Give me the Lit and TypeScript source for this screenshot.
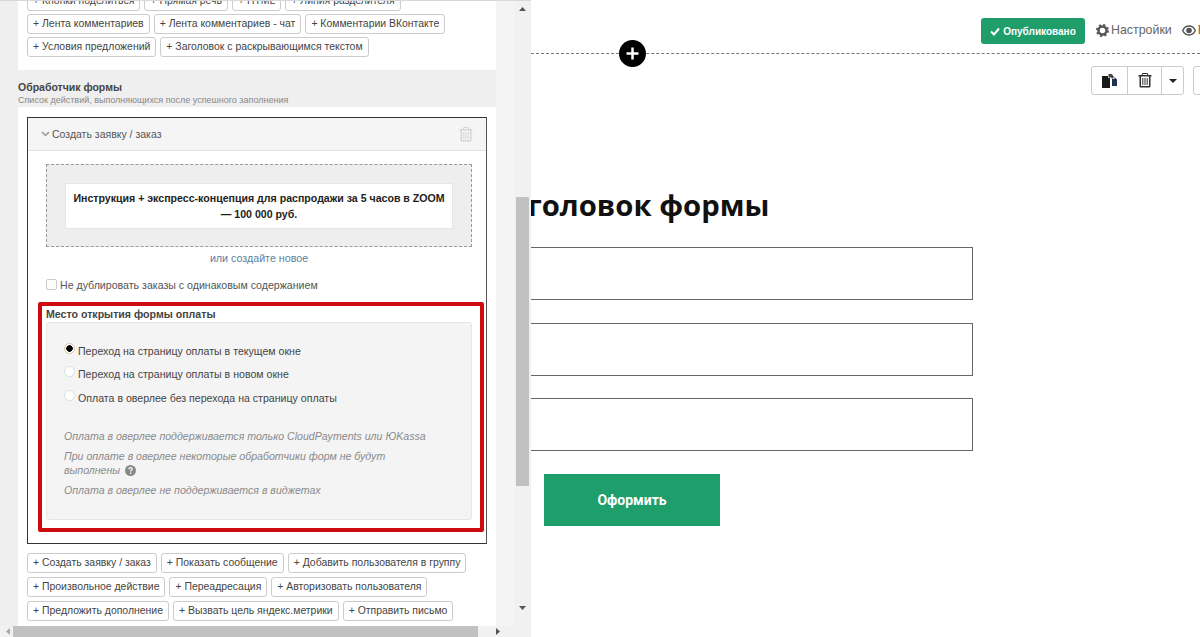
import { LitElement, html, css, svg } from "lit";
import { customElement } from "lit/decorators.js";

const topRows = [
  ["+ Кнопки поделиться", "+ Прямая речь", "+ HTML", "+ Линия разделителя"],
  ["+ Лента комментариев", "+ Лента комментариев - чат", "+ Комментарии ВКонтакте"],
  ["+ Условия предложений", "+ Заголовок с раскрывающимся текстом"],
];
const bottomRows = [
  ["+ Создать заявку / заказ", "+ Показать сообщение", "+ Добавить пользователя в группу"],
  ["+ Произвольное действие", "+ Переадресация", "+ Авторизовать пользователя"],
  ["+ Предложить дополнение", "+ Вызвать цель яндекс.метрики", "+ Отправить письмо"],
];
const radios = [
  ["Переход на страницу оплаты в текущем окне", true],
  ["Переход на страницу оплаты в новом окне", false],
  ["Оплата в оверлее без перехода на страницу оплаты", false],
] as const;

const trash = (c: string) => svg`<path fill="${c}" d="M4.500 0h5l1 2H13.500v1.500h-1V13c0 1-.7 1.500-1.500 1.500H3c-.8 0-1.500-.5-1.500-1.500V3.500h-1V2H3.500zM5 1l-.4 1h4.800L9 1zM3 3.500V13h8V3.500zM4.300 5h1v7h-1zm2.200 0h1v7h-1zm2.200 0h1v7h-1z"/>`;

@customElement("app-root")
export class AppRoot extends LitElement {
  static styles = css`
    :host { display: block; width: 1200px; height: 637px; overflow: hidden; background: #fff; font-family: "Liberation Sans", Arial, sans-serif; }
    .page { display: flex; height: 637px; }
    .panel { width: 531px; flex: none; display: flex; flex-direction: column; background: #f1f1f1; border-top: 1px solid #d8d8d8; box-sizing: border-box; }
    .main { flex: 1; min-height: 0; display: flex; overflow: hidden; }
    .scroller { width: 515px; flex: none; overflow: hidden; box-sizing: border-box; padding-left: 18px; padding-right: 19px; background: linear-gradient(to right, #efefef 496px, #f4f4f4 496px); }
    .card { background: #fff; padding: 0 9px; }
    .card.first { margin-top: -10px; height: 79px; box-sizing: border-box; display: flex; flex-direction: column; gap: 3px; }
    .row { display: flex; gap: 4px; }
    .chip { height: 20px; line-height: 18px; box-sizing: border-box; border: 1px solid #ccc; border-radius: 3px; background: #fff; padding: 0 5px; font-size: 10.45px; color: #444; white-space: nowrap; }
    .title { margin-top: 10px; font-size: 10.5px; font-weight: bold; color: #444; line-height: 14px; }
    .sub { font-size: 9px; line-height: 12px; color: #888; margin-bottom: 1px; }
    .card.second { padding-top: 10px; height: 520px; box-sizing: border-box; position: relative; }
    .box { height: 427px; box-sizing: border-box; border: 1px solid #333; border-right-color: #555; }
    .boxhead { height: 33px; box-sizing: border-box; background: #f5f5f5; border-bottom: 1px solid #e2e2e2; display: flex; align-items: center; padding: 0 13px; font-size: 10.5px; color: #555; gap: 2px; }
    .boxhead span { flex: 1; }
    .boxbody { padding: 13px 14px 0 18px; }
    .dashed { height: 83px; box-sizing: border-box; background: #eee; border: 1px dashed #999; padding: 18px 18px; }
    .product { height: 46px; box-sizing: border-box; background: #fff; border: 1px solid #e6e6e6; text-align: center; font-size: 10.6px; font-weight: bold; line-height: 16px; color: #222; padding: 6px 4px; }
    .link { text-align: center; font-size: 10.7px; color: #5b7f9f; margin-top: 4px; line-height: 14px; }
    .check { display: flex; align-items: center; gap: 3px; margin-top: 13px; font-size: 10.6px; color: #555; height: 14px; }
    .cb { width: 11px; height: 11px; box-sizing: border-box; border: 1px solid #ccc; border-radius: 2px; background: #fff; margin-top: -2px; }
    .label { font-size: 10.6px; font-weight: bold; color: #444; margin-top: 15px; line-height: 14px; }
    .well { height: 198px; box-sizing: border-box; margin-top: 1px; background: #f4f4f4; border: 1px solid #e6e6e6; border-radius: 3px; padding: 17px 17px 0; }
    .radio { display: flex; gap: 3px; font-size: 10.6px; color: #444; line-height: 14px; height: 23px; align-items: center; }
    .radio:nth-child(1) { height: 22px; }
    .radio:nth-child(2) { height: 23px; margin-bottom: 1px; }
    .dot { width: 11px; height: 11px; box-sizing: border-box; flex: none; border-radius: 50%; border: 1px solid #ddd; background: #fff; margin-top: -5px; position: relative; }
    .dot.on { border-color: #d8c8a8; background: radial-gradient(circle, #000 3px, #fff 3.5px); }
    .notes { margin-top: 20px; font-size: 10.6px; font-style: italic; color: #8a8a8a; line-height: 14px; width: 365px; }
    .notes div { margin-bottom: 6px; }
    .notes svg { vertical-align: -2px; margin-left: 2px; }
    .chips2 { display: flex; flex-direction: column; gap: 4px; margin-top: 9px; }
    .vbar { width: 15px; flex: none; background: #f1f1f1; position: relative; display: flex; flex-direction: column; align-items: center; }
    .up { margin-top: 6px; }
    .thumb { width: 13px; height: 289px; background: #c1c1c1; margin-top: 186px; }
    .dn { margin-top: 120px; }
    .hbar { height: 11px; flex: none; display: flex; align-items: center; background: #f1f1f1; }
    .hbar .t { height: 11px; background: #c1c1c1; width: 465px; margin: 0 18px 0 3px; }
    .hbar .lft { margin-left: 6px; }
    .red { position: absolute; left: 20px; top: 195px; width: 446px; height: 230px; box-sizing: border-box; border: 4px solid #cc0a10; border-radius: 2px; pointer-events: none; }
    .right { flex: 1; min-width: 0; overflow: hidden; }
    .topbar { height: 53px; box-sizing: border-box; display: flex; align-items: flex-start; padding: 18px 0 0 450px; white-space: nowrap; }
    .pub { height: 26px; width: 104px; box-sizing: border-box; background: #1f9e6c; color: #fff; border-radius: 3px; font-size: 10px; font-weight: bold; display: flex; align-items: center; justify-content: center; gap: 3px; flex: none; }
    .navitem { display: flex; align-items: center; gap: 2px; font-size: 12.4px; color: #666; margin-left: 10px; height: 24px; flex: none; }
    .navitem:nth-child(2) { margin-left: 11px; }
    .sep { height: 0; border-top: 1px dashed #777; position: relative; }
    .plus { position: absolute; left: 88px; top: -14px; width: 27px; height: 27px; }
    .tools { display: flex; justify-content: flex-end; padding-top: 12px; margin-right: -30px; gap: 9px; }
    .group { display: flex; height: 29px; box-sizing: border-box; border: 1px solid #ccc; border-radius: 3px; }
    .group div { display: flex; align-items: center; justify-content: center; width: 35px; border-right: 1px solid #ccc; }
    .group div:nth-child(2) { width: 33px; }
    .group div:last-child { border-right: 0; width: 21px; }
    .blank { width: 37px; height: 29px; box-sizing: border-box; border: 1px solid #ccc; border-radius: 3px; }
    .form { margin-left: -40px; width: 482px; padding-top: 89px; }
    h1 { margin: 0 0 20px; font-family: "Open Sans", "Noto Sans", sans-serif; font-size: 29.3px; line-height: 43px; font-weight: 700; color: #111; white-space: nowrap; }
    .input { height: 53px; box-sizing: border-box; border: 1px solid #666; margin-bottom: 22.5px; }
    .submit { margin: 21px 0 0 53px; width: 176px; height: 52px; background: #1e9e6b; color: #fff; font-family: Roboto, sans-serif; font-size: 14px; font-weight: 700; display: flex; align-items: center; justify-content: center; }
    .input:last-of-type { margin-bottom: 0; }
  `;

  chip(t: string) { return html`<div class="chip">${t}</div>`; }

  render() {
    return html`<div class="page">
      <div class="panel">
        <div class="main">
          <div class="scroller">
            <div class="card first">
              ${topRows.map((r) => html`<div class="row">${r.map((c) => this.chip(c))}</div>`)}
            </div>
            <div class="title">Обработчик формы</div>
            <div class="sub">Список действий, выполняющихся после успешного заполнения</div>
            <div class="card second">
              <div class="box">
                <div class="boxhead">
                  <svg width="9" height="6" viewBox="0 0 9 6"><path d="M1 1l3.500 3.500L8 1" fill="none" stroke="#999" stroke-width="1.500"/></svg>
                  <span>Создать заявку / заказ</span>
                  <svg width="14" height="15" viewBox="0 0 14 15">${trash("#d5d5d5")}</svg>
                </div>
                <div class="boxbody">
                  <div class="dashed">
                    <div class="product">Инструкция + экспресс-концепция для распродажи за 5 часов в ZOOM — 100 000 руб.</div>
                  </div>
                  <div class="link">или создайте новое</div>
                  <div class="check"><div class="cb"></div>Не дублировать заказы с одинаковым содержанием</div>
                  <div class="label">Место открытия формы оплаты</div>
                  <div class="well">
                    ${radios.map(([t, on]) => html`<div class="radio"><div class="dot ${on ? "on" : ""}"></div>${t}</div>`)}
                    <div class="notes">
                      <div>Оплата в оверлее поддерживается только CloudPayments или ЮKassa</div>
                      <div>При оплате в оверлее некоторые обработчики форм не будут выполнены
                        <svg width="11" height="11" viewBox="0 0 11 11"><circle cx="5.500" cy="5.500" r="5.500" fill="#888"/><path d="M3.800 4.200c.1-1 .8-1.500 1.700-1.500s1.700.6 1.700 1.400c0 1.100-1.600 1.200-1.600 2.300" fill="none" stroke="#fff" stroke-width="1.200"/><rect x="5" y="7.400" width="1.300" height="1.300" fill="#fff"/></svg>
                      </div>
                      <div>Оплата в оверлее не поддерживается в виджетах</div>
                    </div>
                  </div>
                </div>
              </div>
              <div class="chips2">
                ${bottomRows.map((r) => html`<div class="row">${r.map((c) => this.chip(c))}</div>`)}
              </div>
              <div class="red"></div>
            </div>
          </div>
          <div class="vbar">
            <svg class="up" width="7" height="4" viewBox="0 0 7 4"><path d="M3.500 0L7 4H0z" fill="#555"/></svg>
            <div class="thumb"></div>
            <svg class="dn" width="7" height="4" viewBox="0 0 7 4"><path d="M0 0h7L3.500 4z" fill="#555"/></svg>
          </div>
        </div>
        <div class="hbar">
          <svg class="lft" width="4" height="7" viewBox="0 0 4 7"><path d="M4 0v7L0 3.500z" fill="#aaa"/></svg>
          <div class="t"></div>
          <svg width="4" height="7" viewBox="0 0 4 7"><path d="M0 0v7l4-3.500z" fill="#555"/></svg>
        </div>
      </div>
      <div class="right">
        <div class="topbar">
          <div class="pub">
            <svg width="10" height="9" viewBox="0 0 10 9"><path d="M1 4.500l3 3L9 1.500" fill="none" stroke="#fff" stroke-width="2"/></svg>
            Опубликовано
          </div>
          <div class="navitem">
            <svg width="13" height="13" viewBox="0 0 13 13"><circle cx="6.500" cy="6.500" r="4" fill="none" stroke="#555" stroke-width="2.400"/><circle cx="6.500" cy="6.500" r="5.600" fill="none" stroke="#555" stroke-width="1.800" stroke-dasharray="2.200 2.200"/></svg>
            Настройки
          </div>
          <div class="navitem">
            <svg width="14" height="11" viewBox="0 0 14 11"><path d="M7 1C4 1 1.800 3 .7 5.500 1.800 8 4 10 7 10s5.200-2 6.300-4.500C12.200 3 10 1 7 1z" fill="none" stroke="#555" stroke-width="1.400"/><circle cx="7" cy="5.500" r="2.800" fill="#555"/></svg>
            Просмотр
          </div>
        </div>
        <div class="sep">
          <svg class="plus" viewBox="0 0 27 27"><circle cx="13.500" cy="13.500" r="13.500" fill="#000"/><path d="M13.500 7.500v12M7.500 13.500h12" stroke="#fff" stroke-width="2.500"/></svg>
        </div>
        <div class="tools">
          <div class="group">
            <div><svg width="15" height="14" viewBox="0 0 15 14"><path d="M0 2h6v2h2v10H0z" fill="#1a1a1a"/><path d="M6.500 0l3 0 2 2 0 2.500H9.500V3.500H6.500z" fill="#444"/><path d="M10 5h2.500V3L15 5.500V12h-5z" fill="#1f3050"/></svg></div>
            <div><svg width="14" height="15" viewBox="0 0 14 15">${trash("#333")}</svg></div>
            <div><svg width="8" height="4" viewBox="0 0 8 4"><path d="M0 0h8L4 4z" fill="#222"/></svg></div>
          </div>
          <div class="blank"></div>
        </div>
        <div class="form">
          <h1>Заголовок формы</h1>
          <div class="input"></div>
          <div class="input"></div>
          <div class="input"></div>
          <div class="submit">Оформить</div>
        </div>
      </div>
    </div>`;
  }
}
